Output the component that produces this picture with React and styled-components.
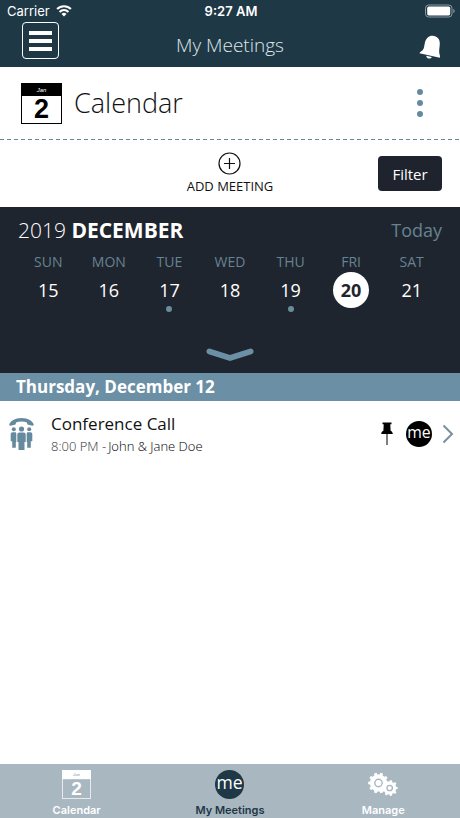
import styled, { createGlobalStyle } from "styled-components";

const GlobalStyle = createGlobalStyle`
    * {
        box-sizing: border-box;
    }
    body {
        margin: 0;
        background: #ffffff;
        color: #111111;
        font-family: "Open Sans", sans-serif;
    }
    button {
        border: 0;
        padding: 0;
        background: none;
        color: inherit;
        font: inherit;
        cursor: pointer;
    }
    a {
        color: inherit;
        text-decoration: none;
    }
    svg {
        display: block;
    }
    h1, h2, h3, p {
        margin: 0;
        font-weight: inherit;
    }
`;

const Screen = styled.div`
    display: flex;
    flex-direction: column;
    min-height: 100vh;
`;

const Header = styled.header`
    background: #1f3846;
    color: #ffffff;
`;

const StatusBar = styled.div`
    display: grid;
    grid-template-columns: 1fr auto 1fr;
    align-items: center;
    height: 22px;
    padding: 0 5px 0 7px;
    font-family: Inter, sans-serif;
    font-size: 13px;
    line-height: 16px;
    .carrier {
        display: flex;
        align-items: center;
        gap: 6px;
    }
    .time {
        font-weight: 600;
    }
    .battery {
        justify-self: end;
    }
`;

const NavBar = styled.div`
    display: grid;
    grid-template-columns: 1fr auto 1fr;
    align-items: start;
    height: 45px;
    padding: 0 18px;
    h1 {
        padding-top: 11px;
        font-size: 19px;
        font-weight: 300;
        line-height: 24px;
        color: #dde6ea;
    }
`;

const MenuButton = styled.button`
    display: flex;
    flex-direction: column;
    align-items: center;
    justify-content: center;
    gap: 4px;
    width: 37px;
    height: 37px;
    margin-left: 4px;
    border: 1px solid #ffffff;
    border-radius: 4px;
    span {
        width: 23px;
        height: 4px;
        background: #ffffff;
    }
`;

const BellButton = styled.button`
    justify-self: end;
    padding-top: 13px;
`;

const TitleRow = styled.section`
    display: flex;
    align-items: center;
    gap: 12px;
    height: 72px;
    padding: 0 32px 0 21px;
    h2 {
        flex: 1;
        font-size: 27px;
        font-weight: 300;
        line-height: 36px;
    }
`;

const MoreButton = styled.button`
    display: flex;
    flex-direction: column;
    gap: 5px;
    padding: 0 5px;
    span {
        width: 6px;
        height: 6px;
        border-radius: 50%;
        background: #668a9d;
    }
`;

const DashedLine = styled.div`
    height: 1px;
    background: repeating-linear-gradient(to right, #668a9d 0 4px, #ffffff 4px 7px);
`;

const Actions = styled.section`
    display: grid;
    grid-template-columns: 1fr auto 1fr;
    align-items: center;
    height: 67px;
    padding: 0 18px;
`;

const AddButton = styled.button`
    grid-column: 2;
    display: flex;
    flex-direction: column;
    align-items: center;
    gap: 1px;
    font-size: 13px;
    line-height: 20px;
`;

const FilterButton = styled.button`
    justify-self: end;
    width: 64px;
    height: 35px;
    border-radius: 4px;
    background: #1f232e;
    color: #ffffff;
    font-size: 15px;
    line-height: 20px;
`;

const Week = styled.section`
    display: flex;
    flex-direction: column;
    padding: 9px 18px 11px;
    background: #1f252f;
    color: #ffffff;
`;

const MonthRow = styled.div`
    display: flex;
    align-items: center;
    justify-content: space-between;
    h2 {
        font-size: 21px;
        font-weight: 300;
        line-height: 28px;
    }
    strong {
        font-weight: 700;
    }
    button {
        color: #668391;
        font-size: 18px;
        line-height: 28px;
    }
`;

const Days = styled.div`
    display: grid;
    grid-template-columns: repeat(7, 1fr);
    padding-top: 7px;
`;

const Day = styled.button`
    display: flex;
    flex-direction: column;
    align-items: center;
    .name {
        height: 21px;
        font-size: 14px;
        line-height: 21px;
        color: #668391;
    }
    .number {
        width: 36px;
        height: 36px;
        border-radius: 50%;
        background: ${({ $selected }) => ($selected ? "#ffffff" : "transparent")};
        color: ${({ $selected }) => ($selected ? "#1f252f" : "#ffffff")};
        font-size: 18px;
        font-weight: ${({ $selected }) => ($selected ? 700 : 400)};
        line-height: 36px;
    }
    .dot {
        width: 6px;
        height: 6px;
        margin-top: -2px;
        border-radius: 50%;
        background: ${({ $busy }) => ($busy ? "#6b8c9d" : "transparent")};
    }
`;

const ExpandButton = styled.button`
    align-self: center;
    padding-top: 36px;
`;

const DateBand = styled.h3`
    height: 28px;
    padding: 0 16px;
    background: #6b8fa4;
    color: #ffffff;
    font-size: 17px;
    font-weight: 700;
    line-height: 28px;
`;

const Meeting = styled.a`
    display: flex;
    align-items: center;
    padding: 11px 6px 10px 9px;
    .info {
        flex: 1;
        padding-left: 17px;
    }
    h4 {
        margin: 0;
        font-size: 17px;
        font-weight: 400;
        line-height: 24px;
    }
    p {
        display: flex;
        gap: 2px;
        color: #333333;
        font-size: 13px;
        font-weight: 300;
        line-height: 20px;
    }
    .who {
        color: #000000;
    }
    .icons {
        display: flex;
        align-items: center;
        gap: 10px;
    }
`;

const TabBar = styled.nav`
    display: grid;
    grid-template-columns: repeat(3, 1fr);
    margin-top: auto;
    background: #a9b7c1;
`;

const Tab = styled.a`
    display: flex;
    flex-direction: column;
    align-items: center;
    gap: 4px;
    height: 54px;
    padding-top: 6px;
    color: ${({ $active }) => ($active ? "#1f3846" : "#ffffff")};
    font-family: Inter, sans-serif;
    font-size: 11px;
    font-weight: 600;
    line-height: 14px;
`;

const days = [
    { name: "SUN", number: 15 },
    { name: "MON", number: 16 },
    { name: "TUE", number: 17, busy: true },
    { name: "WED", number: 18 },
    { name: "THU", number: 19, busy: true },
    { name: "FRI", number: 20, selected: true },
    { name: "SAT", number: 21 },
];

function WifiIcon() {
    return (
        <svg width="16" height="12" viewBox="0 0 16 12" fill="none" stroke="#ffffff" strokeWidth="2.1">
            <path d="M1.1 4.1a9.8 9.8 0 0 1 13.8 0" />
            <path d="M3.6 6.9a6.2 6.2 0 0 1 8.8 0" />
            <path d="M8 11.6 5.5 9a3.6 3.6 0 0 1 5 0z" fill="#ffffff" stroke="none" />
        </svg>
    );
}

function BatteryIcon() {
    return (
        <svg className="battery" width="30" height="14" viewBox="0 0 30 14">
            <rect x="0.5" y="1" width="26.5" height="12" rx="3.2" fill="none" stroke="#8d9ba3" />
            <rect x="2.2" y="2.6" width="23" height="8.8" rx="1.6" fill="#ffffff" />
            <path d="M28.3 5v4q1.4-.6 1.4-2t-1.4-2z" fill="#8d9ba3" />
        </svg>
    );
}

function BellIcon() {
    return (
        <svg width="24" height="24" viewBox="0 0 24 24" fill="#ffffff">
            <path d="M14.5.8c4.800.3 7.600 3.600 7.300 8-.2 3.800-.9 6.700-.5 9.400.2 1.300 1 2.100.6 4.500L1.500 18.200c.4-1.700 2.300-1.800 3.500-3.400 1.300-2 1.200-4.600 2-7.600C8.200 3.200 10.900.7 14.500.8z" />
            <path d="M8.300 20.700 13.800 21.900c-.5 1.300-1.800 1.900-3.200 1.600s-2.300-1.300-2.300-2.800z" />
        </svg>
    );
}

function CalendarIcon({ size, color, numberColor, monthColor }) {
    return (
        <svg width={size} height={size} viewBox="0 0 41 41">
            <rect x="0.5" y="0.5" width="40" height="40" fill="none" stroke={color} />
            <rect width="41" height="13" fill={color} />
            <text x="20.5" y="9" textAnchor="middle" fill={monthColor} fontFamily="Liberation Sans, sans-serif" fontSize="6" fontWeight="400" fontStyle="italic">Jan</text>
            <text x="20.5" y="35" textAnchor="middle" fill={numberColor} fontFamily="Liberation Sans, sans-serif" fontSize="27" fontWeight="700">2</text>
        </svg>
    );
}

function MeLogo({ size, color }) {
    return (
        <svg width={size} height={size} viewBox="0 0 28 28">
            <circle cx="14" cy="14" r="14" fill={color} />
            <text x="14" y="18.5" textAnchor="middle" fill="#ffffff" fontFamily="Open Sans, sans-serif" fontSize="17" fontWeight="400">me</text>
        </svg>
    );
}

function PlusIcon() {
    return (
        <svg width="23" height="23" viewBox="0 0 23 23" fill="none" stroke="#111111" strokeWidth="1.2">
            <circle cx="11.5" cy="11.5" r="10.5" />
            <path d="M11.5 6v11M6 11.5h11" />
        </svg>
    );
}

function ConferenceIcon() {
    return (
        <svg width="25" height="34" viewBox="0 0 25 34" fill="#668a9d">
            <path d="M.3 7.6C1 4.2 6 1 12.5 1S24 4.2 24.7 7.6c.1.9-.5 1.300-1.200 1.100l-4.300-.9c-.8-.2-1-.7-1.200-2.300-3.200-1.300-7.800-1.300-11 0-.2 1.600-.4 2.100-1.200 2.300l-4.300.9c-.7.2-1.300-.2-1.200-1.100z" />
            <circle cx="4.8" cy="12.3" r="2" />
            <circle cx="20.2" cy="12.3" r="2" />
            <circle cx="12.5" cy="12" r="2.6" />
            <path d="M3.5 15.200h3.200l.6 1.300v8.300l-.5.6v5.300H3.200v-6.200l-1.500-.6v-7.200q0-1.500 1.800-1.500z" />
            <path d="M21.5 15.200h-3.200l-.6 1.300v8.300l.5.6v5.300h3.600v-6.200l1.500-.6v-7.200q0-1.500-1.800-1.500z" />
            <path d="M10.300 15.500h4.400q2 0 2 2v7.500h-1.200v8H9.500v-8H8.300v-7.500q0-2 2-2z" />
        </svg>
    );
}

function PinIcon() {
    return (
        <svg width="18" height="24" viewBox="-3 0 18 24">
            <path d="M1.500.5h9v1.800H9.300l.3 6.500c1.400.7 2.100 1.700 2.200 3.200H.2c.1-1.500.8-2.500 2.200-3.200l.3-6.500H1.500z" />
            <path d="M5.500 12h1v11h-1z" />
        </svg>
    );
}

function ChevronRight() {
    return (
        <svg width="12" height="20" viewBox="0 0 12 20" fill="none" stroke="#7890a0" strokeWidth="2">
            <path d="M1.500 1.500 10 10l-8.500 8.500" />
        </svg>
    );
}

function ExpandIcon() {
    return (
        <svg width="48" height="14" viewBox="0 0 48 14" fill="none" stroke="#6b8fa4" strokeWidth="6" strokeLinecap="round" strokeLinejoin="round">
            <path d="M3.500 3.500 24 10l20.500-6.500" />
        </svg>
    );
}

/* Outline of a cog with square teeth, centred on cx, cy */
function gearPath(cx, cy, outer, inner, teeth) {
    const points = [];
    for (let i = 0; i < teeth; i++) {
        const middle = (i * 2 * Math.PI) / teeth;
        const step = Math.PI / teeth;
        [[-0.6, inner], [-0.4, outer], [0.4, outer], [0.6, inner]].forEach(([offset, radius]) => {
            const angle = middle + offset * step;
            points.push(`${cx + radius * Math.cos(angle)} ${cy + radius * Math.sin(angle)}`);
        });
    }
    return `M${points.join("L")}Z`;
}

function GearsIcon() {
    return (
        <svg width="30" height="29" viewBox="0 0 30 29">
            <path d={gearPath(10.5, 13, 10.4, 8.6, 10)} fill="#ffffff" />
            <circle cx="10.5" cy="13" r="3.7" fill="none" stroke="#a9b7c1" strokeWidth="1.4" />
            <path d={gearPath(21.7, 18, 8, 6.5, 9)} fill="#ffffff" />
            <circle cx="21.7" cy="18" r="2.7" fill="none" stroke="#a9b7c1" strokeWidth="1.3" />
        </svg>
    );
}

export default function App() {
    return (
        <Screen>
            <GlobalStyle />
            <Header>
                <StatusBar>
                    <div className="carrier">
                        <span>Carrier</span>
                        <WifiIcon />
                    </div>
                    <span className="time">9:27 AM</span>
                    <BatteryIcon />
                </StatusBar>
                <NavBar>
                    <MenuButton aria-label="Menu">
                        <span />
                        <span />
                        <span />
                    </MenuButton>
                    <h1>My Meetings</h1>
                    <BellButton aria-label="Notifications"><BellIcon /></BellButton>
                </NavBar>
            </Header>

            <TitleRow>
                <CalendarIcon size={41} color="#000000" numberColor="#000000" monthColor="#ffffff" />
                <h2>Calendar</h2>
                <MoreButton aria-label="More options">
                    <span />
                    <span />
                    <span />
                </MoreButton>
            </TitleRow>
            <DashedLine />
            <Actions>
                <AddButton>
                    <PlusIcon />
                    ADD MEETING
                </AddButton>
                <FilterButton>Filter</FilterButton>
            </Actions>

            <Week>
                <MonthRow>
                    <h2>2019 <strong>DECEMBER</strong></h2>
                    <button>Today</button>
                </MonthRow>
                <Days>
                    {days.map((day) => (
                        <Day key={day.number} $selected={day.selected} $busy={day.busy}>
                            <span className="name">{day.name}</span>
                            <span className="number">{day.number}</span>
                            <span className="dot" />
                        </Day>
                    ))}
                </Days>
                <ExpandButton aria-label="Show month"><ExpandIcon /></ExpandButton>
            </Week>

            <DateBand>Thursday, December 12</DateBand>
            <Meeting href="#meeting">
                <ConferenceIcon />
                <div className="info">
                    <h4>Conference Call</h4>
                    <p>
                        <span>8:00 PM -</span>
                        <span className="who">John &amp; Jane Doe</span>
                    </p>
                </div>
                <div className="icons">
                    <PinIcon />
                    <MeLogo size={26} color="#000000" />
                    <ChevronRight />
                </div>
            </Meeting>

            <TabBar>
                <Tab href="#calendar">
                    <CalendarIcon size={29} color="#ffffff" numberColor="#ffffff" monthColor="#8796a1" />
                    Calendar
                </Tab>
                <Tab href="#meetings" $active>
                    <MeLogo size={29} color="#1f3846" />
                    My Meetings
                </Tab>
                <Tab href="#manage">
                    <GearsIcon />
                    Manage
                </Tab>
            </TabBar>
        </Screen>
    );
}
